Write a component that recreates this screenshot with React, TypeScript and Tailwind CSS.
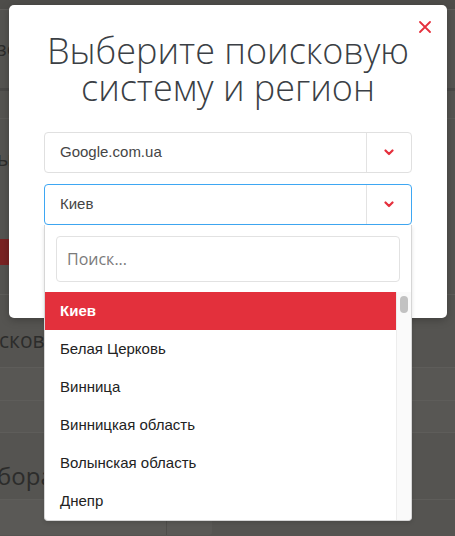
import React from 'react';

const regions = ['Киев', 'Белая Церковь', 'Винница', 'Винницкая область', 'Волынская область', 'Днепр'];

function Chevron() {
  return (
    <svg width="10" height="7" viewBox="0 0 10 7" className="block">
      <path d="M1.5 1.5 L5 5 L8.5 1.5" fill="none" stroke="#e5303d" strokeWidth="2.2" strokeLinecap="round" strokeLinejoin="round" />
    </svg>
  );
}

function Select({ value, active }: { value: string; active?: boolean }) {
  return (
    <div
      className={`flex h-[41px] items-stretch rounded-[4px] border bg-white ${active ? 'border-[#3ea7f3]' : 'border-[#e0e0e0]'}`}
    >
      <div className="flex flex-1 items-center pl-[15px] text-[15px] text-[#454545] [font-family:'Liberation_Sans',Arial,sans-serif]">
        {value}
      </div>
      <div className="flex w-[45px] items-center justify-center border-l border-[#e3e3e3]">
        <Chevron />
      </div>
    </div>
  );
}

export default function App() {
  return (
    <div className="relative h-[536px] w-[455px] overflow-hidden bg-[#555451] [font-family:'Open_Sans',sans-serif]">
      {/* dimmed page behind the modal */}
      <div className="flex flex-col text-[#2c2c2b]">
        <div className="h-[9px] bg-[#4e4d4a]" />
        <div className="flex h-[79px] items-center border-t border-[#5f5e5b] text-[20px]">
          <span className="-ml-[3px]">зе</span>
        </div>
        <div className="h-[3px] bg-[#4a4947]" />
        <div className="h-[28px] border-b border-[#5c5b58]" />
        <div className="flex h-[80px] items-center text-[20px]">
          <span className="-ml-[3px]">ы</span>
        </div>
        <div className="h-[40px]" />
        <div className="h-[26px] w-[30px] bg-[#7a2323]" />
        <div className="h-[30px] border-b border-[#5e5d5a]" />
        <div className="flex h-[72px] items-center pt-[20px] text-[21px]">
          <span className="-ml-[1px]">скова</span>
        </div>
        <div className="h-[34px] border-y border-[#5e5d5a] bg-[#585754]" />
        <div className="h-[32px] border-b border-[#5e5d5a] bg-[#585754]" />
        <div className="flex h-[66px] items-center pt-[20px] text-[24px]">
          <span className="-ml-[3px]">бора</span>
        </div>
        <div className="flex h-[36px] border-t border-[#5e5d5a]">
          <div className="w-[167px] border-r border-[#4e4d4a] bg-[#5a5956]" />
          <div className="w-[45px] rounded-br-[3px] bg-[#5a5956]" />
        </div>
      </div>

      {/* modal */}
      <div className="absolute left-[9px] top-[5px] h-[313px] w-[438px] rounded-[5px] bg-white px-[35px] pt-[27px] shadow-[0_2px_8px_rgba(0,0,0,0.25)]">
        <button className="absolute right-[16px] top-[16px] flex h-[12px] w-[12px] items-center justify-center">
          <svg width="12" height="12" viewBox="0 0 12 12">
            <path d="M1 1 L11 11 M11 1 L1 11" stroke="#e5303d" strokeWidth="1.8" strokeLinecap="round" />
          </svg>
        </button>
        <h2 className="text-center text-[36px] font-light leading-[37px] text-[#3b3f45]">
          Выберите поисковую
          <br />
          систему и регион
        </h2>
        <div className="mt-[26px] flex flex-col gap-[11px]">
          <Select value="Google.com.ua" />
          <div className="relative">
            <Select value="Киев" active />
            <div className="absolute left-0 top-full w-full rounded-b-[4px] border border-t-0 border-[#d6d6d6] bg-white shadow-[0_2px_4px_rgba(0,0,0,0.12)]">
              <div className="px-[11px] pb-[10px] pt-[11px]">
                <div className="flex h-[46px] items-center rounded-[4px] border border-[#e2e2e2] pl-[10px] text-[16px] text-[#7a7a7a]">
                  Поиск...
                </div>
              </div>
              <div className="flex h-[228px] overflow-hidden rounded-b-[4px]">
                <ul className="flex-1 [font-family:'Liberation_Sans',Arial,sans-serif] text-[15px] text-[#222]">
                  {regions.map((r, i) => (
                    <li
                      key={r}
                      className={`flex h-[38px] items-center pl-[15px] ${i === 0 ? 'bg-[#e3303c] font-bold text-white' : ''}`}
                    >
                      {r}
                    </li>
                  ))}
                </ul>
                <div className="w-[15px] border-l border-[#ededed] bg-[#fafafa] pt-[4px]">
                  <div className="mx-auto h-[17px] w-[8px] rounded-full bg-[#c2c2c2]" />
                </div>
              </div>
            </div>
          </div>
        </div>
      </div>
    </div>
  );
}
